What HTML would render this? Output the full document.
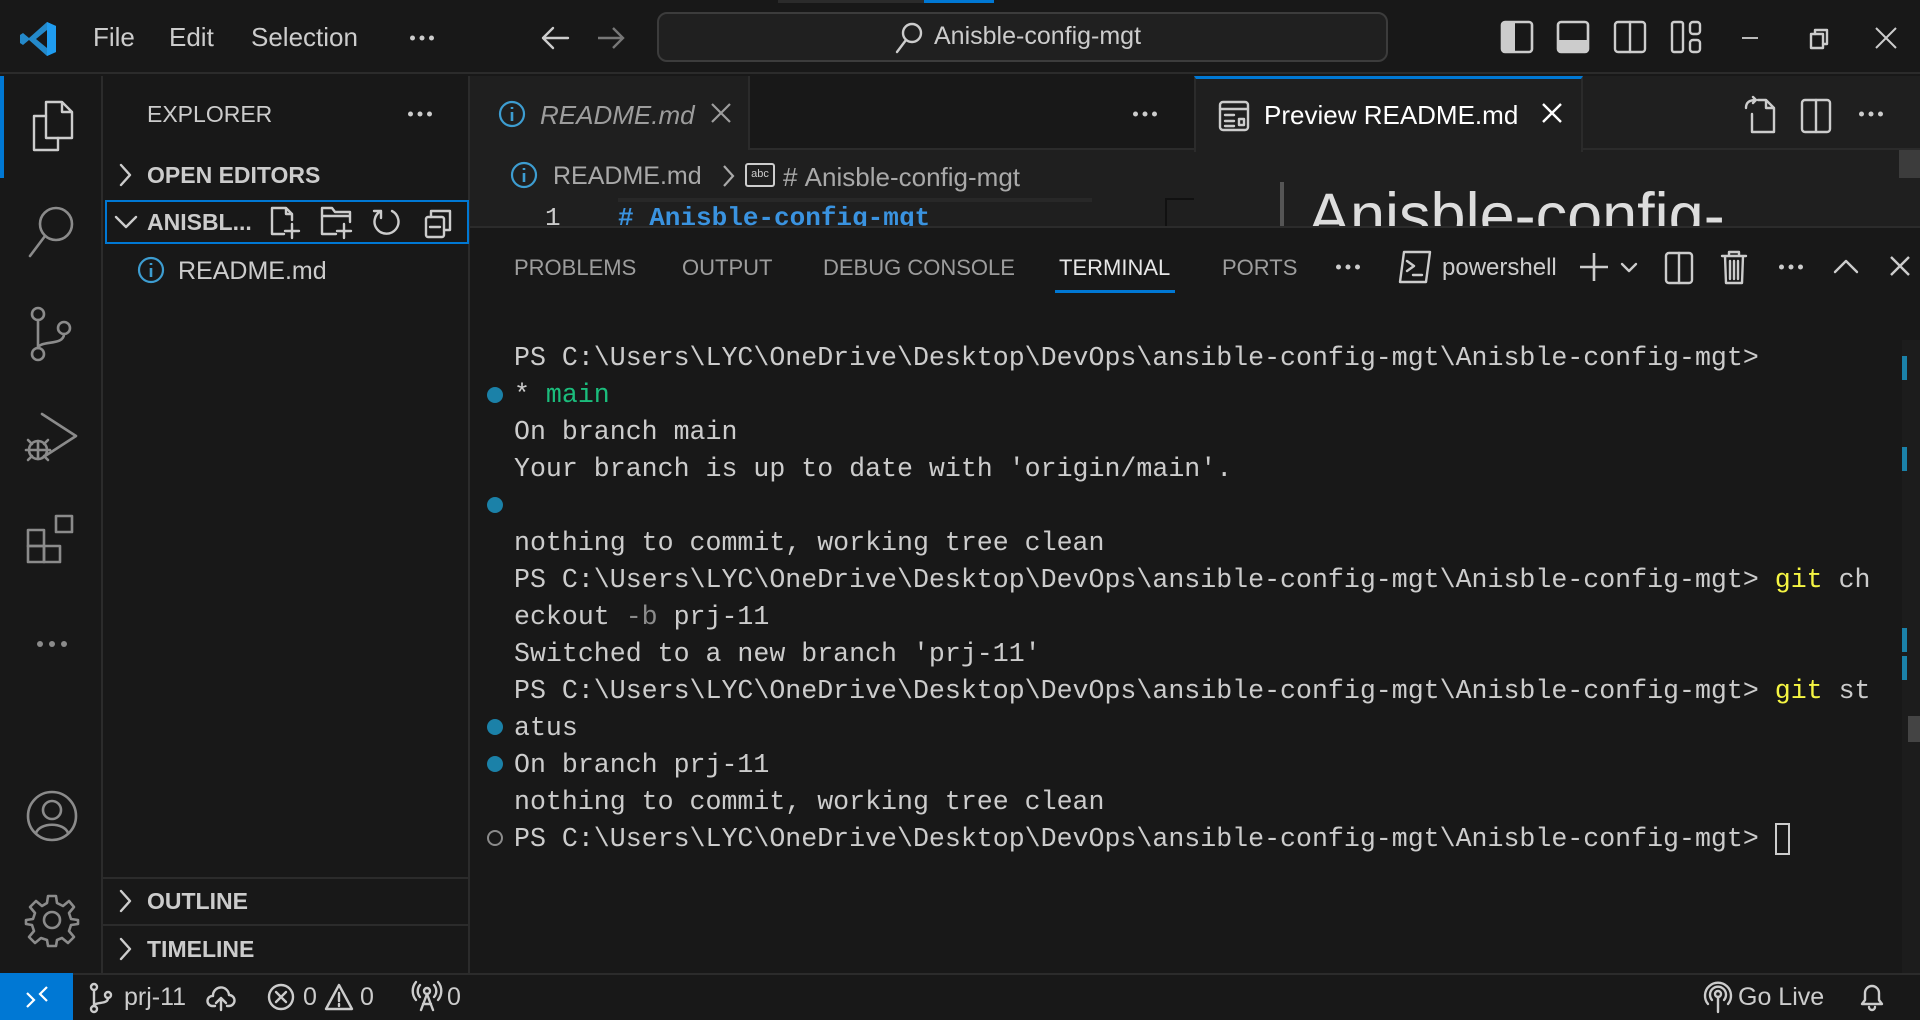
<!DOCTYPE html>
<html><head><meta charset="utf-8"><style>
*{margin:0;padding:0;box-sizing:border-box}
body{width:1920px;height:1020px;background:#181818;position:relative;overflow:hidden;font-family:"Liberation Sans",sans-serif;color:#ccc}
.a{position:absolute;white-space:nowrap}
.ui{font-size:25px}
svg{position:absolute;overflow:visible}
.ic{fill:none;stroke:#cccccc;stroke-width:2.4;stroke-linecap:round;stroke-linejoin:round}
.ig{fill:none;stroke:#8b8b8b;stroke-width:2.6;stroke-linecap:round;stroke-linejoin:round}
.term{font-family:"Liberation Mono",monospace;font-size:26.6px;line-height:37px;color:#cccccc}
.dot{position:absolute;left:487px;width:16px;height:16px;border-radius:50%;background:#1b81a8}
.dd circle{fill:#ccc}
</style></head><body>
<!-- title bar -->
<div class="a" style="left:0;top:0;width:1920px;height:74px;background:#181818;border-bottom:2px solid #2b2b2b"></div>
<div class="a" style="left:778px;top:0;width:146px;height:3px;background:#2b2b2b"></div>
<div class="a" style="left:924px;top:0;width:70px;height:3px;background:#0078d4"></div>
<svg style="left:20px;top:20px" width="38" height="38" viewBox="0 0 38 38"><path d="M27 2 L36 6 V32 L27 36 L9 20 L3 25 L0 23 V15 L3 13 L9 18 Z" fill="#2489ca"/><path d="M27 10 L16 19 L27 28 Z" fill="#181818"/><path d="M27 2 L36 6 V32 L27 36 Z" fill="#1f9cf0"/></svg>
<div class="a ui" style="left:93px;top:22px;font-size:26px">File</div>
<div class="a ui" style="left:169px;top:22px;font-size:26px">Edit</div>
<div class="a ui" style="left:251px;top:22px;font-size:26px">Selection</div>
<svg class="dd" style="left:410px;top:35px" width="24" height="6"><circle cx="2.5" cy="3" r="2.5"/><circle cx="12" cy="3" r="2.5"/><circle cx="21.5" cy="3" r="2.5"/></svg>
<svg style="left:540px;top:26px" width="30" height="24" class="ic"><path d="M28 12H3M13 2L3 12L13 22"/></svg>
<svg style="left:596px;top:26px" width="30" height="24"><path d="M2 12H27M17 2L27 12L17 22" style="fill:none;stroke:#777;stroke-width:2.4"/></svg>
<div class="a" style="left:657px;top:12px;width:731px;height:50px;border:2px solid #3c3c3c;border-radius:10px;background:#202020"></div>
<svg style="left:894px;top:22px" width="30" height="32" class="ic"><circle cx="18" cy="11" r="9"/><path d="M12 18L3 30"/></svg>
<div class="a ui" style="left:934px;top:22px;font-size:25px">Anisble-config-mgt</div>
<svg style="left:1500px;top:20px" width="34" height="34"><rect x="2" y="2" width="30" height="30" rx="3" fill="none" stroke="#ccc" stroke-width="2.6"/><rect x="2" y="2" width="13" height="30" fill="#ccc"/></svg>
<svg style="left:1556px;top:20px" width="34" height="34"><rect x="2" y="2" width="30" height="30" rx="3" fill="none" stroke="#ccc" stroke-width="2.6"/><rect x="2" y="20" width="30" height="12" fill="#ccc"/></svg>
<svg style="left:1613px;top:20px" width="34" height="34" class="ic"><rect x="2" y="2" width="30" height="30" rx="3"/><path d="M17 2V32"/></svg>
<svg style="left:1670px;top:20px" width="34" height="34" class="ic"><rect x="2" y="2" width="11" height="30" rx="2"/><rect x="20" y="2" width="10" height="12" rx="3"/><rect x="20" y="20" width="10" height="12" rx="3"/></svg>
<svg style="left:1740px;top:36px" width="20" height="4"><path d="M2 2H18" stroke="#ccc" stroke-width="1.8"/></svg>
<svg style="left:1809px;top:28px" width="22" height="22" class="ic" style="stroke-width:1.8"><rect x="2" y="6" width="12" height="14"/><path d="M6 6V2H18V16H14"/></svg>
<svg style="left:1874px;top:26px" width="24" height="24"><path d="M2 2L22 22M22 2L2 22" stroke="#ccc" stroke-width="2"/></svg>

<!-- activity bar -->
<div class="a" style="left:0;top:76px;width:103px;height:897px;background:#181818;border-right:2px solid #2b2b2b"></div>
<div class="a" style="left:0;top:76px;width:4px;height:102px;background:#0078d4"></div>
<svg style="left:28px;top:100px" width="48" height="52" class="ic" style="stroke-width:2.6"><path d="M18 2H34L44 12V38H18Z M34 2V12H44"/><path d="M18 16H6V50H30V38"/></svg>
<svg style="left:26px;top:204px" width="52" height="56" class="ig"><circle cx="30" cy="20" r="16"/><path d="M19 32L4 52"/></svg>
<svg style="left:28px;top:306px" width="46" height="56" class="ig"><circle cx="10" cy="8" r="6"/><circle cx="10" cy="48" r="6"/><circle cx="36" cy="22" r="6"/><path d="M10 14V42M36 28C36 40 12 34 10 42"/></svg>
<svg style="left:24px;top:410px" width="56" height="56" class="ig"><path d="M18 4L52 26L18 48"/><circle cx="14" cy="40" r="9"/><path d="M2 40H26M14 31V49M4 30L8 34M4 50L8 46M24 30L20 34M24 50L20 46"/></svg>
<svg style="left:26px;top:512px" width="54" height="54" class="ig"><rect x="2" y="18" width="16" height="16"/><rect x="2" y="34" width="16" height="16"/><rect x="18" y="34" width="16" height="16"/><rect x="30" y="4" width="16" height="16"/></svg>
<svg style="left:37px;top:640px" width="32" height="8"><circle cx="3" cy="4" r="3" fill="#8b8b8b"/><circle cx="15" cy="4" r="3" fill="#8b8b8b"/><circle cx="27" cy="4" r="3" fill="#8b8b8b"/></svg>
<svg style="left:24px;top:788px" width="56" height="56" class="ig"><circle cx="28" cy="28" r="24"/><circle cx="28" cy="22" r="9"/><path d="M12 45C16 34 40 34 44 45"/></svg>
<svg style="left:24px;top:892px" width="56" height="56" class="ig"><circle cx="28" cy="28" r="8"/><path d="M24 4H32L33 11L39 14L45 9L50 15L45 21L47 27L54 28V32L47 33L45 39L50 45L44 51L38 46L33 48L32 54H24L23 48L17 46L11 51L5 45L10 39L8 33L2 32V28L9 27L11 21L6 15L12 9L18 14L23 11Z"/></svg>

<!-- sidebar -->
<div class="a" style="left:103px;top:76px;width:367px;height:897px;background:#181818;border-right:2px solid #2b2b2b"></div>
<div class="a ui" style="left:147px;top:101px;font-size:23px">EXPLORER</div>
<svg class="dd" style="left:408px;top:111px" width="24" height="6"><circle cx="2.5" cy="3" r="2.5"/><circle cx="12" cy="3" r="2.5"/><circle cx="21.5" cy="3" r="2.5"/></svg>
<svg style="left:118px;top:163px" width="14" height="24" class="ic"><path d="M3 2L12 12L3 22"/></svg>
<div class="a" style="left:147px;top:162px;font-size:23px;font-weight:bold">OPEN EDITORS</div>
<div class="a" style="left:105px;top:200px;width:364px;height:44px;border:2px solid #0078d4"></div>
<svg style="left:114px;top:215px" width="24" height="14" class="ic"><path d="M2 2L12 12L22 2"/></svg>
<div class="a" style="left:147px;top:209px;font-size:23px;font-weight:bold">ANISBL...</div>
<svg style="left:270px;top:206px" width="30" height="34" class="ic" style="stroke-width:2"><path d="M14 28H2V2H16L22 8V14M16 2V8H22M22 18V32M15 25H29"/></svg>
<svg style="left:320px;top:206px" width="34" height="34" class="ic" style="stroke-width:2"><path d="M16 28H2V2H12L15 6H30V16M2 10H30M24 18V32M17 25H31"/></svg>
<svg style="left:372px;top:206px" width="30" height="34" class="ic" style="stroke-width:2"><path d="M20 5A12 12 0 1 1 9 5M9 5V12M9 5H2"/></svg>
<svg style="left:424px;top:206px" width="30" height="34" class="ic" style="stroke-width:2"><rect x="2" y="11" width="18" height="20" rx="2"/><path d="M7 11V5H26V24H20M6 21H16"/></svg>
<svg style="left:137px;top:256px" width="28" height="28"><circle cx="14" cy="14" r="12" fill="none" stroke="#3d9dd1" stroke-width="2.2"/><path d="M14 12V21M14 7V9" stroke="#3d9dd1" stroke-width="2.6"/></svg>
<div class="a" style="left:178px;top:257px;font-size:25px">README.md</div>
<div class="a" style="left:103px;top:877px;width:367px;height:2px;background:#2b2b2b"></div>
<svg style="left:118px;top:889px" width="14" height="24" class="ic"><path d="M3 2L12 12L3 22"/></svg>
<div class="a" style="left:147px;top:888px;font-size:23px;font-weight:bold">OUTLINE</div>
<div class="a" style="left:103px;top:924px;width:367px;height:2px;background:#2b2b2b"></div>
<svg style="left:118px;top:937px" width="14" height="24" class="ic"><path d="M3 2L12 12L3 22"/></svg>
<div class="a" style="left:147px;top:936px;font-size:23px;font-weight:bold">TIMELINE</div>

<!-- editor groups -->
<div class="a" style="left:470px;top:76px;width:1450px;height:152px;background:#1f1f1f"></div>
<div class="a" style="left:470px;top:76px;width:724px;height:74px;background:#181818;border-bottom:2px solid #2b2b2b"></div>
<div class="a" style="left:470px;top:76px;width:280px;height:74px;background:#1f1f1f;border-right:2px solid #2b2b2b"></div>
<svg style="left:498px;top:100px" width="28" height="28"><circle cx="14" cy="14" r="12" fill="none" stroke="#3d9dd1" stroke-width="2.2"/><path d="M14 12V21M14 7V9" stroke="#3d9dd1" stroke-width="2.6"/></svg>
<div class="a" style="left:540px;top:100px;font-size:26px;font-style:italic;color:#9d9d9d">README.md</div>
<svg style="left:710px;top:102px" width="22" height="22"><path d="M2 2L20 20M20 2L2 20" stroke="#9d9d9d" stroke-width="2.2"/></svg>
<svg class="dd" style="left:1133px;top:111px" width="24" height="6"><circle cx="2.5" cy="3" r="2.5"/><circle cx="12" cy="3" r="2.5"/><circle cx="21.5" cy="3" r="2.5"/></svg>
<svg style="left:510px;top:161px" width="28" height="28"><circle cx="14" cy="14" r="12" fill="none" stroke="#3d9dd1" stroke-width="2.2"/><path d="M14 12V21M14 7V9" stroke="#3d9dd1" stroke-width="2.6"/></svg>
<div class="a" style="left:553px;top:162px;font-size:25px;color:#a9a9a9">README.md</div>
<svg style="left:721px;top:164px" width="14" height="24"><path d="M3 2L12 12L3 22" fill="none" stroke="#a9a9a9" stroke-width="2.2"/></svg>
<div class="a" style="left:745px;top:163px;width:30px;height:24px;border:2px solid #ccc;border-radius:3px;font-size:11px;text-align:center;line-height:18px">abc</div>
<div class="a" style="left:783px;top:162px;font-size:26px;color:#a9a9a9">#&nbsp;Anisble-config-mgt</div>
<div class="a" style="left:618px;top:198px;width:474px;height:4px;background:#282828"></div>
<div class="a" style="left:1165px;top:198px;width:29px;height:30px;border-left:2px solid #111;border-top:2px solid #111"></div>
<div class="a" style="left:470px;top:200px;width:724px;height:28px;overflow:hidden">
<div class="a term" style="left:75px;top:0;font-size:26px;color:#ccc">1</div>
<div class="a term" style="left:148px;top:0;font-size:26px;color:#3a93e0;font-weight:bold">#&nbsp;Anisble-config-mgt</div></div>
<div class="a" style="left:1194px;top:76px;width:389px;height:76px;background:#1f1f1f;border-top:3px solid #0078d4;border-left:2px solid #2b2b2b;border-right:2px solid #2b2b2b"></div>
<div class="a" style="left:1583px;top:148px;width:337px;height:2px;background:#2b2b2b"></div>
<svg style="left:1218px;top:100px" width="32" height="32" class="ic" style="stroke-width:2"><rect x="2" y="2" width="28" height="28" rx="3"/><path d="M2 9H30M7 15H16M7 21H16M7 26H16M21 19H26V25H21Z"/></svg>
<div class="a" style="left:1264px;top:100px;font-size:26px;color:#fff">Preview README.md</div>
<svg style="left:1541px;top:102px" width="22" height="22"><path d="M2 2L20 20M20 2L2 20" stroke="#fff" stroke-width="2.4"/></svg>
<svg style="left:1744px;top:96px" width="34" height="40" class="ic" style="stroke-width:2"><path d="M8 18V36H30V12L22 4H14M22 4V12H30M2 12C2 6 6 4 12 4M9 1L12 4L9 7"/></svg>
<svg style="left:1800px;top:98px" width="32" height="36" class="ic"><rect x="2" y="2" width="28" height="32" rx="3"/><path d="M16 2V34"/></svg>
<svg class="dd" style="left:1859px;top:111px" width="24" height="6"><circle cx="2.5" cy="3" r="2.5"/><circle cx="12" cy="3" r="2.5"/><circle cx="21.5" cy="3" r="2.5"/></svg>
<div class="a" style="left:1899px;top:150px;width:21px;height:28px;background:#3c3c3c"></div>
<div class="a" style="left:1280px;top:182px;width:4px;height:46px;background:#555"></div>
<div class="a" style="left:1304px;top:150px;width:600px;height:78px;overflow:hidden"><div class="a" style="left:4px;top:30px;font-size:63px;color:#ddd">Anisble-config-</div></div>

<!-- panel -->
<div class="a" style="left:470px;top:226px;width:1450px;height:747px;background:#181818;border-top:2px solid #2b2b2b"></div>
<div class="a ui" style="left:514px;top:255px;font-size:22px;color:#9d9d9d">PROBLEMS</div>
<div class="a ui" style="left:682px;top:255px;font-size:22px;color:#9d9d9d">OUTPUT</div>
<div class="a ui" style="left:823px;top:255px;font-size:22px;color:#9d9d9d">DEBUG CONSOLE</div>
<div class="a ui" style="left:1059px;top:255px;font-size:22px;color:#e7e7e7">TERMINAL</div>
<div class="a" style="left:1055px;top:290px;width:120px;height:3px;background:#0078d4"></div>
<div class="a ui" style="left:1222px;top:255px;font-size:22px;color:#9d9d9d">PORTS</div>
<svg class="dd" style="left:1336px;top:264px" width="24" height="6"><circle cx="2.5" cy="3" r="2.5"/><circle cx="12" cy="3" r="2.5"/><circle cx="21.5" cy="3" r="2.5"/></svg>
<svg style="left:1398px;top:250px" width="34" height="34" class="ic" style="stroke-width:2"><path d="M6 2H32L28 32H2Z M9 11L16 16L9 21M15 25H24"/></svg>
<div class="a ui" style="left:1442px;top:254px;font-size:24px">powershell</div>
<svg style="left:1578px;top:251px" width="32" height="32"><path d="M16 2V30M2 16H30" stroke="#ccc" stroke-width="2.6"/></svg>
<svg style="left:1620px;top:262px" width="18" height="12" class="ic" style="stroke-width:2"><path d="M2 2L9 9L16 2"/></svg>
<svg style="left:1664px;top:251px" width="30" height="34" class="ic"><rect x="2" y="2" width="26" height="30" rx="3"/><path d="M15 2V32"/></svg>
<svg style="left:1720px;top:249px" width="28" height="36" class="ic"><path d="M2 7H26M9 7V3H19V7M5 7L6 34H22L23 7M10 12V30M14 12V30M18 12V30"/></svg>
<svg class="dd" style="left:1779px;top:264px" width="24" height="6"><circle cx="2.5" cy="3" r="2.5"/><circle cx="12" cy="3" r="2.5"/><circle cx="21.5" cy="3" r="2.5"/></svg>
<svg style="left:1833px;top:258px" width="26" height="16" class="ic"><path d="M2 14L13 3L24 14"/></svg>
<svg style="left:1889px;top:255px" width="22" height="22"><path d="M2 2L20 20M20 2L2 20" stroke="#ccc" stroke-width="2.4"/></svg>

<div class="a term" style="left:514px;top:340px">PS C:\Users\LYC\OneDrive\Desktop\DevOps\ansible-config-mgt\Anisble-config-mgt&gt;<br>* <span style="color:#1bbd7c">main</span><br>On branch main<br>Your branch is up to date with 'origin/main'.<br><br>nothing to commit, working tree clean<br>PS C:\Users\LYC\OneDrive\Desktop\DevOps\ansible-config-mgt\Anisble-config-mgt&gt; <span style="color:#f5f543">git</span> ch<br>eckout <span style="color:#8b8b8b">-b</span> prj-11<br>Switched to a new branch 'prj-11'<br>PS C:\Users\LYC\OneDrive\Desktop\DevOps\ansible-config-mgt\Anisble-config-mgt&gt; <span style="color:#f5f543">git</span> st<br>atus<br>On branch prj-11<br>nothing to commit, working tree clean<br>PS C:\Users\LYC\OneDrive\Desktop\DevOps\ansible-config-mgt\Anisble-config-mgt&gt; <span style="display:inline-block;width:15px;height:32px;border:2px solid #ccc;vertical-align:middle"></span></div>
<div class="dot" style="top:387px"></div>
<div class="dot" style="top:497px"></div>
<div class="dot" style="top:719px"></div>
<div class="dot" style="top:756px"></div>
<div class="dot" style="top:830px;background:none;border:2px solid #8b8b8b"></div>
<div class="a" style="left:1902px;top:340px;width:18px;height:633px;background:#1c1c1c"></div>
<div class="a" style="left:1902px;top:356px;width:5px;height:24px;background:#1b81a8"></div>
<div class="a" style="left:1902px;top:447px;width:5px;height:24px;background:#1b81a8"></div>
<div class="a" style="left:1902px;top:628px;width:5px;height:24px;background:#1b81a8"></div>
<div class="a" style="left:1902px;top:656px;width:5px;height:24px;background:#1b81a8"></div>
<div class="a" style="left:1908px;top:716px;width:12px;height:26px;background:#444"></div>

<!-- status bar -->
<div class="a" style="left:0;top:973px;width:1920px;height:47px;background:#181818;border-top:2px solid #2b2b2b"></div>
<div class="a" style="left:0;top:973px;width:73px;height:47px;background:#0078d4"></div>
<svg style="left:24px;top:984px" width="26" height="26"><path d="M3 9L10 16L3 23M23 3L16 10L23 17" fill="none" stroke="#fff" stroke-width="2.2"/></svg>
<svg style="left:88px;top:983px" width="26" height="30" class="ic" style="stroke-width:2"><circle cx="6" cy="4" r="3"/><circle cx="6" cy="26" r="3"/><circle cx="20" cy="12" r="3"/><path d="M6 7V23M20 15C20 22 7 18 6 23"/></svg>
<div class="a" style="left:124px;top:983px;font-size:25px">prj-11</div>
<svg style="left:206px;top:986px" width="30" height="26" class="ic" style="stroke-width:2"><path d="M9 20H6A5 5 0 0 1 7 10A8 8 0 0 1 23 9A5 5 0 0 1 23 20H21M15 24V12M10 17L15 12L20 17"/></svg>
<svg style="left:267px;top:983px" width="28" height="28" class="ic" style="stroke-width:2"><circle cx="14" cy="14" r="12"/><path d="M9 9L19 19M19 9L9 19"/></svg>
<div class="a" style="left:303px;top:983px;font-size:25px">0</div>
<svg style="left:324px;top:983px" width="30" height="28" class="ic" style="stroke-width:2"><path d="M15 2L28 26H2Z M15 10V18M15 21V23"/></svg>
<div class="a" style="left:360px;top:983px;font-size:25px">0</div>
<svg style="left:412px;top:981px" width="30" height="30" class="ic" style="stroke-width:2"><circle cx="15" cy="10" r="3"/><path d="M15 13L9 29M15 13L21 29M11 23H19M8 4A9 9 0 0 0 8 16M22 4A9 9 0 0 1 22 16M4 1A14 14 0 0 0 4 19M26 1A14 14 0 0 1 26 19"/></svg>
<div class="a" style="left:447px;top:983px;font-size:25px">0</div>
<svg style="left:1704px;top:982px" width="28" height="32" class="ic" style="stroke-width:2"><circle cx="14" cy="12" r="3"/><path d="M14 15V30M8 18A8 8 0 1 1 20 18M4 22A13 13 0 1 1 24 22"/></svg>
<div class="a" style="left:1738px;top:983px;font-size:25px">Go Live</div>
<svg style="left:1858px;top:982px" width="28" height="30" class="ic" style="stroke-width:2"><path d="M4 22H24L21 18V11A7 7 0 0 0 7 11V18Z M11 25A3 3 0 0 0 17 25"/></svg>
</body></html>
